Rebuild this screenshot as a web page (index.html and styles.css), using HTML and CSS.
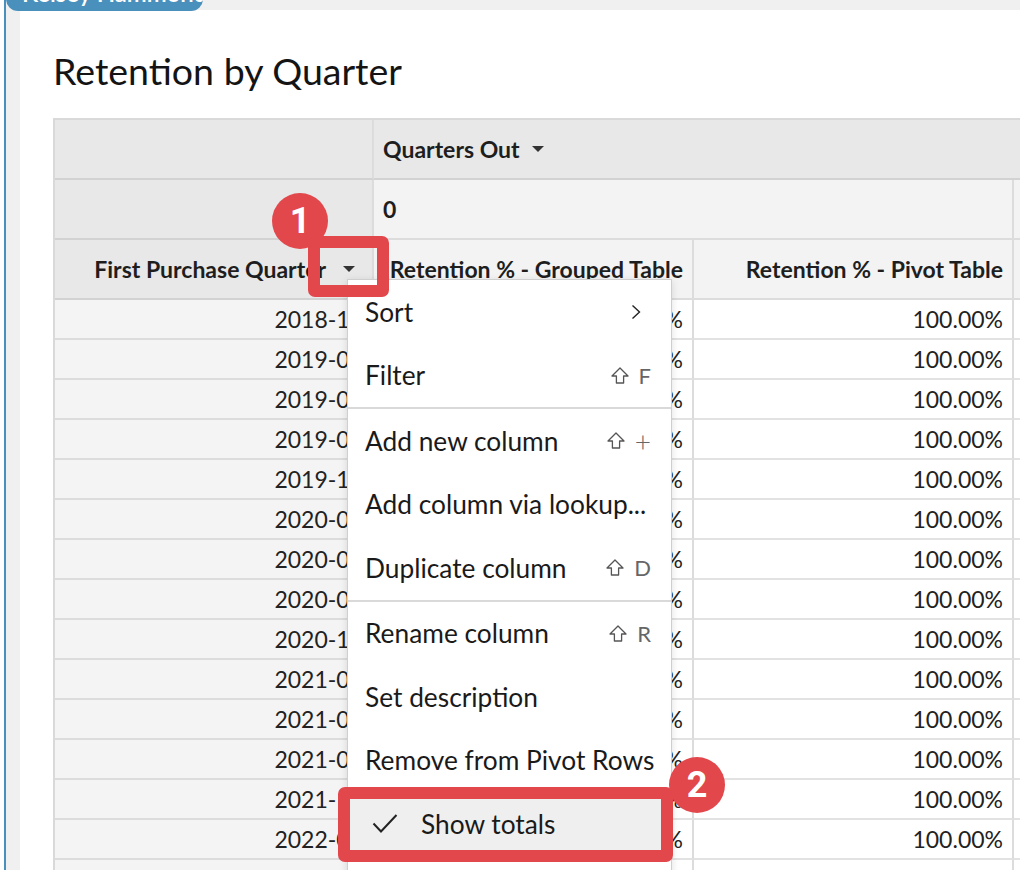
FILE: index.html
```html
<!DOCTYPE html>
<html lang="en">
<head>
<meta charset="utf-8">
<title>Retention by Quarter</title>
<link rel="stylesheet" href="styles.css">
</head>
<body>
<div class="app">
  <div class="rail"></div>
  <div class="canvas">
    <div class="panel">
      <h1 class="title">Retention by Quarter</h1>
      <div class="grid">
        <div class="cell hd"></div>
        <div class="cell hd span3"><span>Quarters Out</span><span class="caret"></span></div>

        <div class="cell hd"></div>
        <div class="cell hl span2">0</div>
        <div class="cell hl"></div>

        <div class="cell hd right"><span class="label">First Purchase Quarter</span><span class="caret-btn"><span class="caret"></span></span></div>
        <div class="cell hl right">Retention % - Grouped Table</div>
        <div class="cell hl right">Retention % - Pivot Table</div>
        <div class="cell hl"></div>

        <div class="cell rh">2018-10</div><div class="cell val">100.00%</div><div class="cell val">100.00%</div><div class="cell val"></div>
        <div class="cell rh">2019-01</div><div class="cell val">100.00%</div><div class="cell val">100.00%</div><div class="cell val"></div>
        <div class="cell rh">2019-04</div><div class="cell val">100.00%</div><div class="cell val">100.00%</div><div class="cell val"></div>
        <div class="cell rh">2019-07</div><div class="cell val">100.00%</div><div class="cell val">100.00%</div><div class="cell val"></div>
        <div class="cell rh">2019-10</div><div class="cell val">100.00%</div><div class="cell val">100.00%</div><div class="cell val"></div>
        <div class="cell rh">2020-01</div><div class="cell val">100.00%</div><div class="cell val">100.00%</div><div class="cell val"></div>
        <div class="cell rh">2020-04</div><div class="cell val">100.00%</div><div class="cell val">100.00%</div><div class="cell val"></div>
        <div class="cell rh">2020-07</div><div class="cell val">100.00%</div><div class="cell val">100.00%</div><div class="cell val"></div>
        <div class="cell rh">2020-10</div><div class="cell val">100.00%</div><div class="cell val">100.00%</div><div class="cell val"></div>
        <div class="cell rh">2021-01</div><div class="cell val">100.00%</div><div class="cell val">100.00%</div><div class="cell val"></div>
        <div class="cell rh">2021-04</div><div class="cell val">100.00%</div><div class="cell val">100.00%</div><div class="cell val"></div>
        <div class="cell rh">2021-07</div><div class="cell val">100.00%</div><div class="cell val">100.00%</div><div class="cell val"></div>
        <div class="cell rh">2021-10</div><div class="cell val">100.00%</div><div class="cell val">100.00%</div><div class="cell val"></div>
        <div class="cell rh">2022-01</div><div class="cell val">100.00%</div><div class="cell val">100.00%</div><div class="cell val"></div>
        <div class="cell rh">2022-04</div><div class="cell val">100.00%</div><div class="cell val">100.00%</div><div class="cell val"></div>
      </div>
    </div>
  </div>

  <div class="tab">Kelsey Hammond</div>

  <div class="menu">
    <div class="item"><span>Sort</span>
      <svg class="chev" width="10" height="16" viewBox="0 0 10 16"><polyline points="1.5,1.5 8.5,8 1.5,14.5" fill="none" stroke="#222" stroke-width="1.4"/></svg>
    </div>
    <div class="item"><span>Filter</span><span class="kbd"><svg class="shift" width="18" height="17" viewBox="0 0 18 17"><path d="M9 1 L17 9 L12.6 9 L12.6 16 L5.4 16 L5.4 9 L1 9 Z" fill="none" stroke="#555" stroke-width="1.3" stroke-linejoin="round"/></svg><span>F</span></span></div>
    <div class="sep"></div>
    <div class="item"><span>Add new column</span><span class="kbd"><svg class="shift" width="18" height="17" viewBox="0 0 18 17"><path d="M9 1 L17 9 L12.6 9 L12.6 16 L5.4 16 L5.4 9 L1 9 Z" fill="none" stroke="#555" stroke-width="1.3" stroke-linejoin="round"/></svg><span class="plus">+</span></span></div>
    <div class="item"><span>Add column via lookup...</span></div>
    <div class="item"><span>Duplicate column</span><span class="kbd"><svg class="shift" width="18" height="17" viewBox="0 0 18 17"><path d="M9 1 L17 9 L12.6 9 L12.6 16 L5.4 16 L5.4 9 L1 9 Z" fill="none" stroke="#555" stroke-width="1.3" stroke-linejoin="round"/></svg><span>D</span></span></div>
    <div class="sep"></div>
    <div class="item"><span>Rename column</span><span class="kbd"><svg class="shift" width="18" height="17" viewBox="0 0 18 17"><path d="M9 1 L17 9 L12.6 9 L12.6 16 L5.4 16 L5.4 9 L1 9 Z" fill="none" stroke="#555" stroke-width="1.3" stroke-linejoin="round"/></svg><span>R</span></span></div>
    <div class="item"><span>Set description</span></div>
    <div class="item"><span>Remove from Pivot Rows</span></div>
    <div class="item checked">
      <svg class="check" width="26" height="21" viewBox="0 0 26 21"><polyline points="1.5,10.5 9,18.5 24.5,2" fill="none" stroke="#222" stroke-width="2"/></svg>
      <span>Show totals</span>
    </div>
    <div class="item"><span>Hide column</span></div>
  </div>

  <div class="mark box1"></div>
  <div class="badge b1">1</div>
  <div class="mark box2"></div>
  <div class="badge b2">2</div>
</div>
</body>
</html>
```

FILE: styles.css
```css
* { box-sizing: border-box; }

html, body {
  margin: 0;
  padding: 0;
  background: #ffffff;
}

body {
  font-family: Lato, "Liberation Sans", sans-serif;
  color: #1c1c1c;
}

.app {
  position: relative;
  display: flex;
  width: 1020px;
  height: 870px;
  padding-left: 4px;
  overflow: hidden;
  background: #ffffff;
}

.rail {
  flex: none;
  width: 2px;
  background: #4a90bd;
}

.canvas {
  flex: 1;
  min-width: 0;
  background: #f0f0f0;
  padding: 10px 0 0 14px;
  overflow: hidden;
}

.panel {
  height: 100%;
  background: #ffffff;
  padding-left: 33px;
  overflow: hidden;
}

.title {
  margin: 0 0 26px 0;
  padding-top: 40px;
  font-size: 37.5px;
  line-height: 42px;
  font-weight: 400;
  color: #141414;
  white-space: nowrap;
}

.grid {
  display: grid;
  grid-template-columns: 319px 320px 320px 320px;
  grid-template-rows: 60px 60px 60px repeat(15, 40px);
  width: max-content;
  border-left: 2px solid #d9d9d9;
  border-top: 2px solid #d9d9d9;
}

.cell {
  display: flex;
  align-items: center;
  padding: 0 9px;
  border-right: 2px solid #dcdcdc;
  border-bottom: 2px solid #dcdcdc;
  white-space: nowrap;
  overflow: hidden;
  font-size: 23px;
}

.span3 { grid-column: span 3; }
.span2 { grid-column: span 2; }

.hd {
  background: #e8e8e8;
  font-weight: 700;
  font-size: 23px;
  color: #1e1e1e;
  border-bottom-color: #d2d2d2;
}

.hl {
  background: #f3f3f3;
  font-weight: 700;
  font-size: 23px;
  color: #1e1e1e;
}

.right { justify-content: flex-end; }

.rh {
  background: #f4f4f4;
  justify-content: flex-end;
  color: #222;
}

.val {
  background: #ffffff;
  justify-content: flex-end;
  color: #222;
  border-bottom-color: #e2e2e2;
}

.caret {
  display: inline-block;
  width: 0;
  height: 0;
  border-left: 6px solid transparent;
  border-right: 6px solid transparent;
  border-top: 6px solid #333;
  margin-left: 12px;
}

.caret-btn {
  display: flex;
  align-items: center;
  justify-content: center;
  width: 46px;
  height: 40px;
  margin-right: -9px;
}

.caret-btn .caret { margin-left: 0; }

.tab {
  position: absolute;
  left: 6px;
  top: -30px;
  width: 197px;
  height: 41px;
  padding: 10.5px 0 0 16px;
  background: #4a90bd;
  border-radius: 0 0 12px 12px;
  color: #ffffff;
  font-size: 24px;
  line-height: 24px;
  font-weight: 600;
  white-space: nowrap;
  overflow: hidden;
}

.menu {
  position: absolute;
  left: 347px;
  top: 279px;
  width: 325px;
  background: #ffffff;
  border: 1px solid #cfcfcf;
  box-shadow: 0 2px 8px rgba(0, 0, 0, 0.12);
}

.item {
  display: flex;
  align-items: center;
  justify-content: space-between;
  height: 63.5px;
  padding: 0 20px 0 17px;
  font-size: 26.3px;
  color: #1a1a1a;
  white-space: nowrap;
}

.item.checked {
  justify-content: flex-start;
  background: #efefef;
  padding-left: 24px;
}

.check { margin-right: 23px; }

.chev { margin-right: 10px; }

.sep {
  height: 2px;
  background: #d9d9d9;
}

.kbd {
  display: flex;
  align-items: center;
  gap: 10px;
  color: #666;
  font-size: 22px;
}

.kbd .plus {
  font-size: 28px;
  font-weight: 300;
  line-height: 1;
}

.mark {
  position: absolute;
  border: 12px solid #e2474c;
  border-radius: 7px;
}

.box1 { left: 308px; top: 236px; width: 81px; height: 61px; }
.box2 { left: 338px; top: 787px; width: 335px; height: 75px; }

.badge {
  position: absolute;
  width: 56px;
  height: 56px;
  border-radius: 50%;
  background: #e2474c;
  color: #ffffff;
  display: flex;
  align-items: center;
  justify-content: center;
  font-family: Roboto, "Liberation Sans", sans-serif;
  font-weight: 700;
  font-size: 36px;
}

.b1 { left: 272px; top: 193px; }
.b2 { left: 669px; top: 757px; }
```
